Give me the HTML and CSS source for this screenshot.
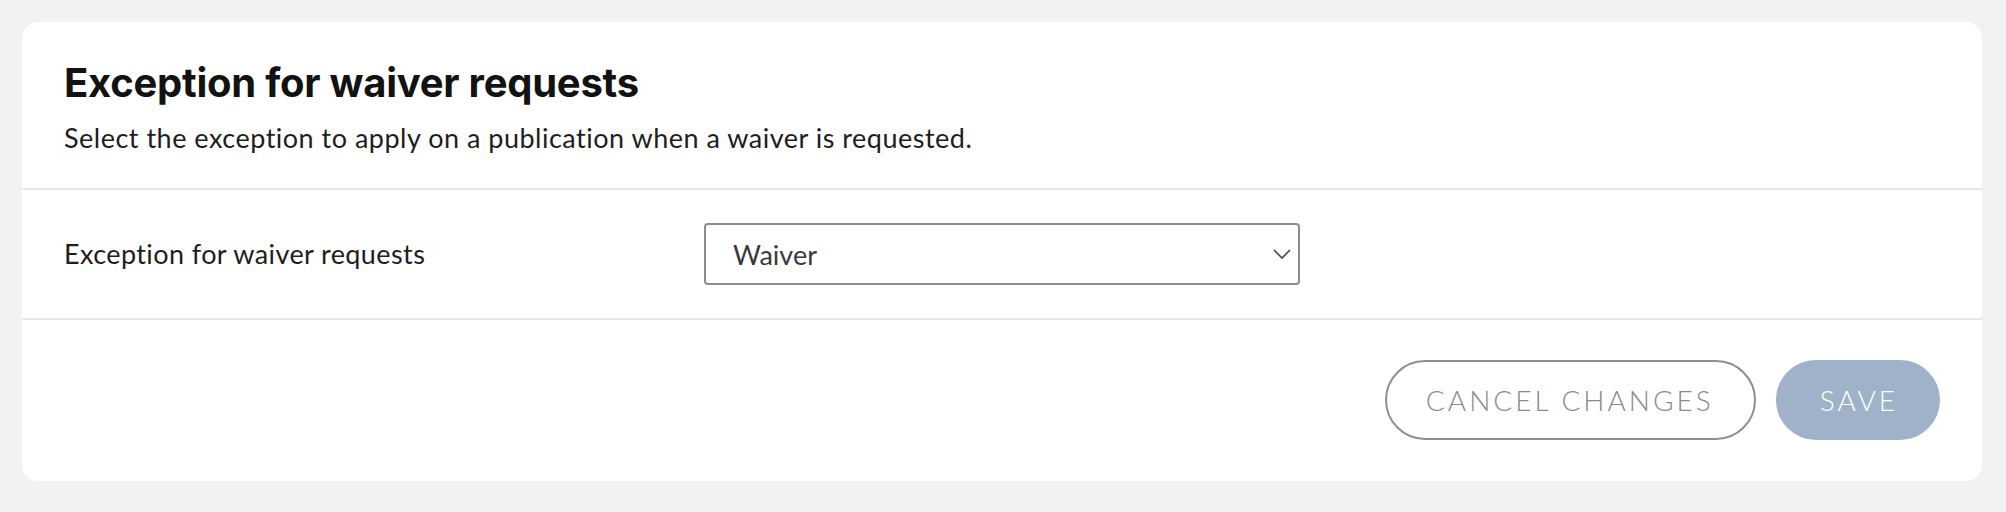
FILE: index.html
```html
<!DOCTYPE html>
<html lang="en">
<head>
<meta charset="utf-8">
<title>Exception for waiver requests</title>
<link rel="stylesheet" href="styles.css">
</head>
<body>
<section class="card">
  <header class="card-head">
    <h2 class="card-title">Exception for waiver requests</h2>
    <p class="card-desc">Select the exception to apply on a publication when a waiver is requested.</p>
  </header>
  <div class="field-row">
    <label class="field-label" for="exc">Exception for waiver requests</label>
    <div class="select" id="exc">
      <span class="select-value">Waiver</span>
      <svg class="chevron" width="18" height="10" viewBox="0 0 18 10" aria-hidden="true"><path d="M1 1 L9 9 L17 1" fill="none" stroke="#444" stroke-width="1.6"/></svg>
    </div>
  </div>
  <div class="actions">
    <button class="btn btn-outline" type="button">Cancel changes</button>
    <button class="btn btn-primary" type="button">Save</button>
  </div>
</section>
</body>
</html>
```
FILE: styles.css
```css
html, body {
  margin: 0;
  padding: 0;
}
body {
  background: #f2f2f2;
  padding: 22px 24px 30px 22px;
  font-family: "Lato", "Liberation Sans", sans-serif;
}
.card {
  background: #fff;
  border-radius: 16px;
  overflow: hidden;
}
.card-head {
  padding: 37px 42px 34px;
  border-bottom: 2px solid #e7e7e7;
}
.card-title {
  margin: 0;
  font-family: "Inter", "Liberation Sans", sans-serif;
  font-weight: 700;
  font-size: 40px;
  line-height: 48px;
  letter-spacing: -0.25px;
  color: #121212;
}
.card-desc {
  margin: 15px 0 0;
  font-size: 27px;
  line-height: 32px;
  letter-spacing: 0.5px;
  color: #1e1e1e;
}
.field-row {
  display: flex;
  align-items: center;
  padding: 33px 42px;
  border-bottom: 2px solid #e7e7e7;
}
.field-label {
  width: 640px;
  font-size: 27px;
  line-height: 32px;
  letter-spacing: 0.4px;
  color: #1e1e1e;
}
.select {
  box-sizing: border-box;
  width: 596px;
  height: 62px;
  border: 2px solid #8c8c8c;
  border-radius: 4px;
  display: flex;
  align-items: center;
  justify-content: space-between;
  padding: 0 7px 0 27px;
}
.select-value {
  font-size: 27px;
  color: #3a3a3a;
}
.chevron {
  display: block;
}
.actions {
  display: flex;
  justify-content: flex-end;
  gap: 20px;
  padding: 40px 42px 41px;
}
.btn {
  box-sizing: border-box;
  height: 80px;
  border-radius: 40px;
  font-family: "Lato", "Liberation Sans", sans-serif;
  font-weight: 300;
  font-size: 28px;
  letter-spacing: 3px;
  text-transform: uppercase;
  padding: 0 40px 0 42px;
  cursor: pointer;
}
.btn-outline {
  background: #fff;
  border: 2px solid #8e8e8e;
  color: #8a8a8a;
  padding-left: 39px;
}
.btn-primary {
  background: #9fb2ca;
  border: 2px solid #9fb2ca;
  color: #fff;
}
```
